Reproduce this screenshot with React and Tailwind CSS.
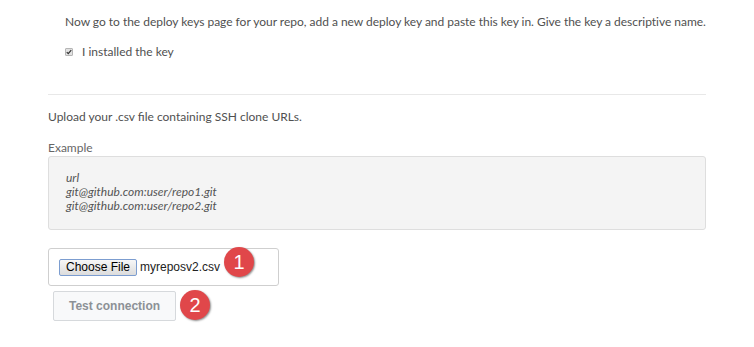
import React from "react";

function Badge({ n, className }) {
  return (
    <span
      className={
        "absolute flex h-[30px] w-[30px] items-center justify-center rounded-full bg-[#e0474a] text-[20px] leading-none text-white shadow-[1px_1px_2px_rgba(0,0,0,0.45)] " +
        className
      }
      style={{ fontFamily: "'Liberation Sans', Arial, sans-serif" }}
    >
      {n}
    </span>
  );
}

export default function App() {
  return (
    <div
      className="h-[347px] w-full overflow-hidden bg-white text-[12px] text-[#505050]"
      style={{ fontFamily: "Lato, 'Open Sans', sans-serif" }}
    >
      <div className="ml-[48px] w-[658px]">
        {/* deploy key step */}
        <p className="whitespace-nowrap pl-[17px] pt-[12px] leading-[20px] tracking-[-0.02px]">
          Now go to the deploy keys page for your repo, add a new deploy key and paste this key in. Give the key a descriptive name.
        </p>
        <label className="mt-[10px] flex h-[20px] items-center pl-[17px]">
          <span className="flex h-[8px] w-[8px] items-center justify-center rounded-[1px] border border-[#b5b5b5] bg-[#e2e2e2]">
            <svg viewBox="0 0 8 8" className="h-[6px] w-[6px]">
              <path d="M1 4.2 L3 6.2 L7 1.5" fill="none" stroke="#333" strokeWidth="1.6" />
            </svg>
          </span>
          <span className="ml-[9px]">I installed the key</span>
        </label>

        <div className="mt-[32px] border-t border-[#e8e8e8]" />

        {/* upload */}
        <p className="mt-[14px] leading-[16px]">Upload your .csv file containing SSH clone URLs.</p>
        <p className="mt-[15px] leading-[16px] text-[#666]">Example</p>
        <div className="h-[74px] rounded-[3px] border border-[#dedede] bg-[#f4f4f4] pl-[17px] pt-[14px] italic leading-[14px] text-[#555]">
          <div>url</div>
          <div>git@github.com:user/repo1.git</div>
          <div>git@github.com:user/repo2.git</div>
        </div>

        <div
          className="relative mt-[18px] flex h-[38px] w-[231px] items-center rounded-[3px] border border-[#cfcfcf] pl-[10px] text-[12px] text-[#222]"
          style={{ fontFamily: "'Liberation Sans', Arial, sans-serif" }}
        >
          <span className="flex h-[17px] items-center rounded-[2px] border border-[#7c9dd0] bg-gradient-to-b from-[#f7f7f7] to-[#dcdcdc] px-[6px] text-black">
            Choose File
          </span>
          <span className="ml-[3px]">myreposv2.csv</span>
          <Badge n="1" className="left-[175px] top-[-2px]" />
        </div>

        <div className="relative mt-[5px] h-[30px]">
          <button
            className="ml-[5px] flex h-[30px] w-[123px] items-center justify-center rounded-[2px] border border-[#d6d9dc] bg-[#f8f9fa] text-[12px] font-bold text-[#8c9196]"
            style={{ fontFamily: "'Liberation Sans', Arial, sans-serif" }}
          >
            Test connection
          </button>
          <Badge n="2" className="left-[132px] top-[-1px]" />
        </div>
      </div>
    </div>
  );
}
